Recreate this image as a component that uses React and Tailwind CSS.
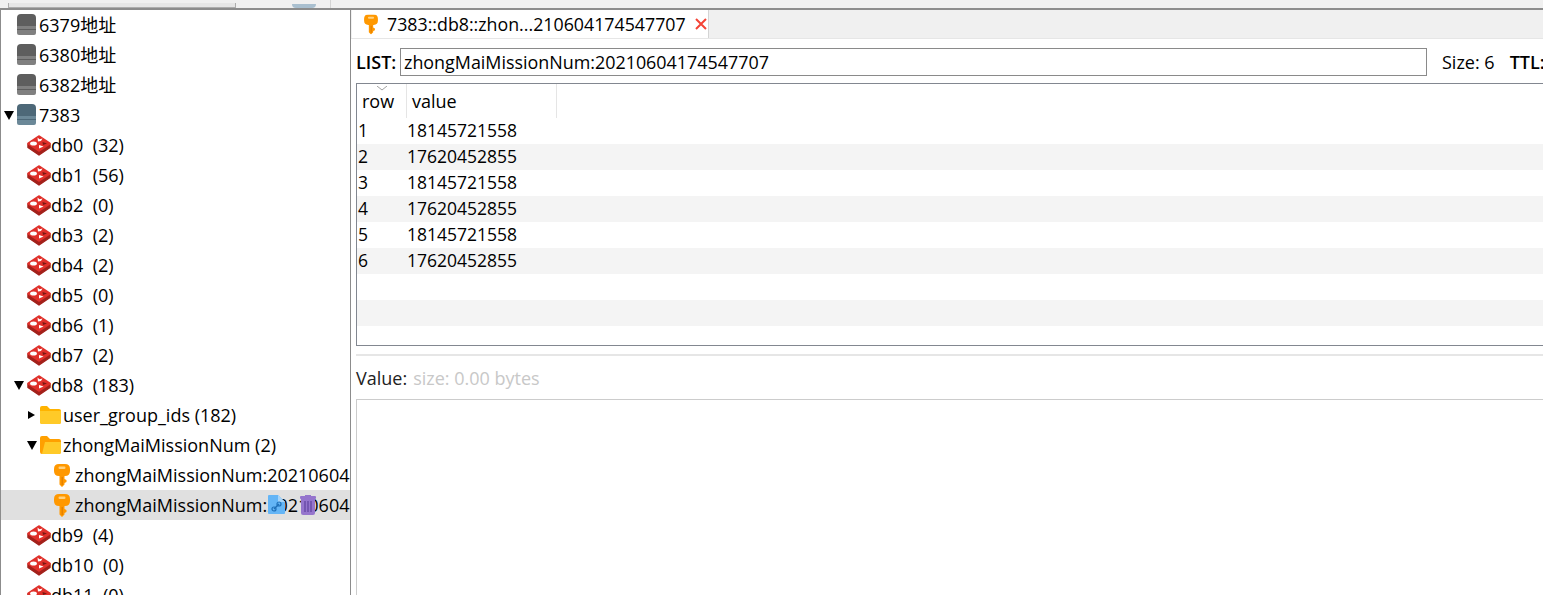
const font = { fontFamily: '"Open Sans", "Noto Sans CJK SC", sans-serif' }

const tree = [
  { level: 0, icon: 'server', label: '6379地址' },
  { level: 0, icon: 'server', label: '6380地址' },
  { level: 0, icon: 'server', label: '6382地址' },
  { level: 0, icon: 'serverOn', label: '7383', arrow: 'open' },
  { level: 1, icon: 'db', label: 'db0  (32)' },
  { level: 1, icon: 'db', label: 'db1  (56)' },
  { level: 1, icon: 'db', label: 'db2  (0)' },
  { level: 1, icon: 'db', label: 'db3  (2)' },
  { level: 1, icon: 'db', label: 'db4  (2)' },
  { level: 1, icon: 'db', label: 'db5  (0)' },
  { level: 1, icon: 'db', label: 'db6  (1)' },
  { level: 1, icon: 'db', label: 'db7  (2)' },
  { level: 1, icon: 'db', label: 'db8  (183)', arrow: 'open' },
  { level: 2, icon: 'folder', label: 'user_group_ids (182)', arrow: 'closed' },
  { level: 2, icon: 'folderOpen', label: 'zhongMaiMissionNum (2)', arrow: 'open' },
  { level: 3, icon: 'key', label: 'zhongMaiMissionNum:20210604' },
  { level: 3, icon: 'key', label: 'zhongMaiMissionNum:20210604', selected: true },
  { level: 1, icon: 'db', label: 'db9  (4)' },
  { level: 1, icon: 'db', label: 'db10  (0)' },
  { level: 1, icon: 'db', label: 'db11  (0)' },
]

const rows = [
  ['1', '18145721558'],
  ['2', '17620452855'],
  ['3', '18145721558'],
  ['4', '17620452855'],
  ['5', '18145721558'],
  ['6', '17620452855'],
]

const levelPad = ['pl-[2px]', 'pl-[12px]', 'pl-[25px]', 'pl-[39px]']

function ServerIcon({ on }) {
  const top = on ? '#4d6878' : '#5e5e5e'
  const low = on ? '#6b8898' : '#808080'
  return (
    <svg width="19" height="22" viewBox="0 0 19 22" className="shrink-0">
      <path d="M0 4 Q0 0 4 0 H15 Q19 0 19 4 V12 H0 Z" fill={top} />
      <rect x="0" y="12" width="19" height="3" fill={low} />
      <rect x="0" y="15" width="19" height="1" fill={top} />
      <rect x="0" y="16" width="19" height="2" fill={low} />
      <path d="M0 18 H19 V19 Q19 21 17 21 H2 Q0 21 0 19 Z" fill={low} />
    </svg>
  )
}

function DbIcon() {
  return (
    <svg width="24" height="21" viewBox="0 0 24 21" className="shrink-0">
      <path d="M1 9 V12.5 L12 20 L23 12.5 V9 Z" fill="#a3201a" stroke="#a3201a" strokeLinejoin="round" strokeWidth="1.5" />
      <path d="M12 1.5 L22.5 8.5 L12 15.5 L1.5 8.5 Z" fill="#e0302a" stroke="#e0302a" strokeLinejoin="round" strokeWidth="2.5" />
      <path d="M10.5 2.5 L12.5 4.3 L15.5 3.5 L14 6 L11 6.5 Z" fill="#fff" />
      <ellipse cx="6.5" cy="8.5" rx="3.4" ry="2" fill="#fff" />
      <path d="M12 10 L16.5 11.5 L12 13.5 Z" fill="#fff" />
      <path d="M15.5 7 L20 8.5 L16 10 Z" fill="#7a1712" />
    </svg>
  )
}

function FolderIcon({ open }) {
  return (
    <svg width="21" height="18" viewBox="0 0 21 18" className="shrink-0">
      <path d="M0 2 Q0 0 2 0 H7 L10 3 H19 Q21 3 21 5 V16 Q21 18 19 18 H2 Q0 18 0 16 Z" fill={open ? '#ffa000' : '#ffb300'} />
      {open ? (
        <path d="M5 6 H21 V16 Q21 18 19 18 H2 Z" fill="#ffca28" />
      ) : (
        <path d="M0 5 H21 V16 Q21 18 19 18 H2 Q0 18 0 16 Z" fill="#ffca28" />
      )}
    </svg>
  )
}

function KeyIcon() {
  return (
    <svg width="16" height="23" viewBox="0 0 16 23" className="shrink-0">
      <path d="M5 0 H11 Q16 0 16 5 V7 Q16 12 11 12 H10.5 V15 L12.5 16 V18 L10.5 19 V20.5 L8 23 L5.5 20.5 V12 H5 Q0 12 0 7 V5 Q0 0 5 0 Z" fill="#ff9800" />
      <rect x="4.5" y="2.5" width="7" height="2.5" rx="1.2" fill="#ffd180" />
      <rect x="7.5" y="13" width="1.5" height="8" fill="#e68200" />
    </svg>
  )
}

function TreeIcon({ name }) {
  if (name === 'server') return <div className="w-[22px] shrink-0"><ServerIcon /></div>
  if (name === 'serverOn') return <div className="w-[22px] shrink-0"><ServerIcon on /></div>
  if (name === 'db') return <div className="w-[24px] shrink-0"><DbIcon /></div>
  if (name === 'folder') return <div className="w-[23px] shrink-0"><FolderIcon /></div>
  if (name === 'folderOpen') return <div className="w-[23px] shrink-0"><FolderIcon open /></div>
  return <div className="w-[21px] shrink-0"><KeyIcon /></div>
}

function Arrow({ type }) {
  if (type === 'open') {
    return (
      <svg width="10" height="10" viewBox="0 0 10 10" className="ml-[1px]">
        <path d="M0 1 H10 L5 10 Z" fill="#000" />
      </svg>
    )
  }
  if (type === 'closed') {
    return (
      <svg width="7" height="8" viewBox="0 0 7 8" className="ml-[2px]">
        <path d="M0 0 L7 4 L0 8 Z" fill="#000" />
      </svg>
    )
  }
  return null
}

function TreeRow({ item }) {
  return (
    <div className={`relative flex h-[30px] items-center overflow-hidden whitespace-pre ${levelPad[item.level]} ${item.selected ? 'bg-[#e0e0e0]' : ''}`}>
      <div className="flex w-[14px] shrink-0 items-center"><Arrow type={item.arrow} /></div>
      <TreeIcon name={item.icon} />
      <span className="text-[18px] text-black">{item.label}</span>
      {item.selected && (
        <>
          {/* hover buttons sit on top of the key name */}
          <svg width="18" height="20" viewBox="0 0 18 20" className="absolute left-[267px] top-[5px]">
            <path d="M0 1 Q0 0 1 0 H10 L17 7 V18 Q17 19 16 19 H1 Q0 19 0 18 Z" fill="#64b5f6" />
            <path d="M10 0 L17 7 H10 Z" fill="#a5d4fa" />
            <path d="M6 14 L11 9" stroke="#1e6fb8" strokeWidth="1.5" />
            <circle cx="6" cy="14" r="2" fill="none" stroke="#1e6fb8" strokeWidth="1.2" />
            <circle cx="11" cy="9" r="2" fill="none" stroke="#1e6fb8" strokeWidth="1.2" />
          </svg>
          <svg width="16" height="20" viewBox="0 0 16 20" className="absolute left-[299px] top-[5px]">
            <rect x="5" y="0" width="6" height="2" fill="#9575cd" />
            <rect x="0" y="1" width="16" height="3" rx="1" fill="#9575cd" />
            <path d="M1 4 H15 V18 Q15 20 13 20 H3 Q1 20 1 18 Z" fill="#9575cd" />
            <path d="M5 6 V17 M8 6 V17 M11 6 V17" stroke="#6a4ca8" strokeWidth="1.5" />
          </svg>
        </>
      )}
    </div>
  )
}

export default function App() {
  return (
    <div className="flex h-[595px] w-[1543px] flex-col overflow-hidden bg-white text-[18px] text-black" style={font}>
      <div className="flex h-[8px] shrink-0 items-end bg-[#f0f0f0]">
        <div className="ml-[8px] h-[5px] w-[228px] border border-t-0 border-[#adadad] bg-[#e6e6e6]" />
        <div className="ml-[56px] h-[4px] w-[24px] rounded-b-sm bg-[#a9bfcf]" />
        <div className="ml-[14px] h-[8px] w-px bg-[#d4d4d4]" />
      </div>

      <div className="flex min-h-0 flex-1 border-t-2 border-[#8c8c8c]">
        <div className="w-[351px] shrink-0 overflow-hidden border-x border-[#8c8c8c]">
          {tree.map((item, i) => <TreeRow key={i} item={item} />)}
        </div>

        <div className="min-w-0 flex-1 overflow-hidden">
          <div className="flex h-[28px] items-stretch bg-[#f0f0f0] pl-[1px]">
            <div className="flex w-[357px] items-center whitespace-pre border-r border-[#d4d4d4] bg-white pl-[11px]">
              <div className="shrink-0 scale-[0.87]"><KeyIcon /></div>
              <span className="ml-[8px] text-[17.8px]">7383::db8::zhon...210604174547707</span>
              <svg width="12" height="12" viewBox="0 0 12 12" className="ml-[9px] shrink-0">
                <path d="M1 1 L11 11 M11 1 L1 11" stroke="#f44336" strokeWidth="2" />
              </svg>
            </div>
          </div>

          <div className="flex h-[45px] items-center whitespace-nowrap border-t border-[#e6e6e6] pt-[2px] pl-[5px]">
            <span className="w-[44px] shrink-0 font-semibold">LIST:</span>
            <div className="flex h-[28px] w-[1027px] shrink-0 items-center border border-[#8a8a8a] pl-[3px] text-[17.9px]">
              zhongMaiMissionNum:20210604174547707
            </div>
            <span className="ml-[15px]">Size: 6</span>
            <span className="ml-[15px] font-semibold">TTL:</span>
          </div>

          <div className="ml-[5px] mr-[-10px] h-[263px] border border-[#828790]">
            <div className="flex h-[34px]">
              <div className="relative flex w-[50px] items-center border-r border-[#e5e5e5] pl-[5px]">
                row
                <svg width="10" height="5" viewBox="0 0 10 5" className="absolute left-[20px] top-[2px]">
                  <path d="M0 0 L5 4 L10 0" fill="none" stroke="#a0a0a0" />
                </svg>
              </div>
              <div className="flex w-[150px] items-center border-r border-[#e5e5e5] pl-[5px]">value</div>
            </div>
            {rows.map((r, i) => (
              <div key={r[0]} className={`flex h-[26px] items-center pb-[1px] text-[17.5px] ${i % 2 ? 'bg-[#f4f4f4]' : ''}`}>
                <div className="w-[50px] pl-[1px]">{r[0]}</div>
                <div>{r[1]}</div>
              </div>
            ))}
            <div className="h-[26px]" />
            <div className="h-[26px] bg-[#f4f4f4]" />
          </div>

          <div className="ml-[5px] mt-[8px] h-[2px] bg-[#e6e6e6]" />

          <div className="ml-[5px] flex h-[43px] items-center pt-[1px]">
            <span className="text-[#222]">Value:</span>
            <span className="ml-[6px] text-[#c8c8c8]">size: 0.00 bytes</span>
          </div>

          <div className="ml-[5px] mr-[-10px] h-[200px] border border-[#cccccc]" />
        </div>
      </div>
    </div>
  )
}
